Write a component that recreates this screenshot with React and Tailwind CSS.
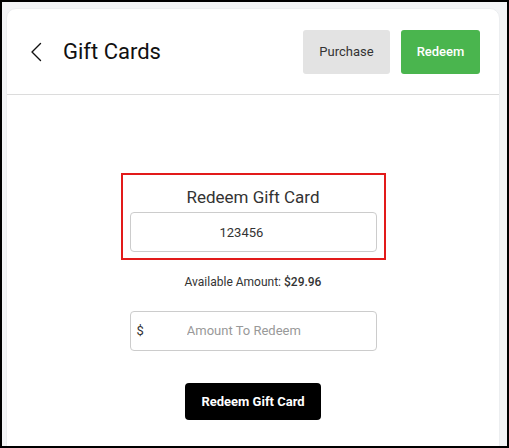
import React, { useState } from 'react';

const ChevronBack = () => (
  <svg width="12" height="20" viewBox="0 0 12 20" fill="none" className="text-[#111]">
    <polyline points="10.5,1.5 2,10 10.5,18.5" stroke="currentColor" strokeWidth="1.4" strokeLinecap="round" strokeLinejoin="round" />
  </svg>
);

export default function App() {
  const [code, setCode] = useState('123456');
  const [amount, setAmount] = useState('');

  return (
    <div className="w-[509px] h-[448px] overflow-hidden border-2 border-black bg-[#f3f4f6] pl-[4px] pt-[6px] font-['Roboto',sans-serif]">
      <div className="w-[494px] h-[460px] bg-white rounded-t-[10px] border border-[#eceef0]">
        {/* Header */}
        <div className="h-[86px] flex items-center justify-between pl-[23px] pr-[19px] border-b border-[#dcdcdc]">
          <div className="flex items-center">
            <button className="w-[12px] h-[20px] flex items-center">
              <ChevronBack />
            </button>
            <h1 className="ml-[21px] text-[22px] text-[#111] leading-none">Gift Cards</h1>
          </div>
          <div className="flex items-center gap-[11px]">
            <button className="w-[87px] h-[44px] rounded-[3px] bg-[#e3e3e3] text-[13px] text-[#333]">Purchase</button>
            <button className="w-[79px] h-[44px] rounded-[3px] bg-[#4ab54e] text-[13px] font-medium text-white">Redeem</button>
          </div>
        </div>

        {/* Body */}
        <div className="flex flex-col items-center pt-[78px]">
          <div className="w-[265px] border-2 border-[#e21a1a] pt-[12px] pb-[6px] px-[7px] flex flex-col items-center gap-[5px]">
            <h2 className="text-[17px] leading-[20px] text-[#333]">Redeem Gift Card</h2>
            <input
              value={code}
              onChange={(e) => setCode(e.target.value)}
              className="w-full h-[40px] rounded-[4px] border border-[#cccccc] pl-[89px] text-[13px] text-[#333] outline-none"
            />
          </div>

          <p className="mt-[14px] text-[12px] leading-[16px] text-[#333]">
            Available Amount: <span className="font-medium">$29.96</span>
          </p>

          <div className="mt-[21px] w-[247px] h-[40px] rounded-[4px] border border-[#cccccc] flex items-center pl-[6px]">
            <span className="text-[13px] text-[#333]">$</span>
            <input
              value={amount}
              onChange={(e) => setAmount(e.target.value)}
              placeholder="Amount To Redeem"
              className="ml-[43px] w-[180px] text-[13px] text-[#333] placeholder:text-[#999] outline-none"
            />
          </div>

          <button className="mt-[32px] w-[136px] h-[37px] rounded-[4px] bg-black text-white text-[13px] font-bold">
            Redeem Gift Card
          </button>
        </div>
      </div>
    </div>
  );
}
